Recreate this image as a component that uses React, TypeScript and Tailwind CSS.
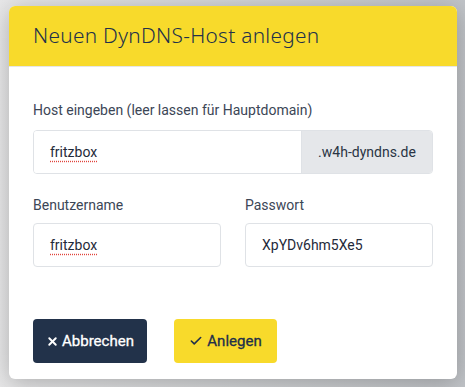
import React from 'react';
import { X, Check } from 'lucide-react';

const Field: React.FC<{ value: string; spell?: boolean; className?: string }> = ({ value, spell, className }) => (
  <div className={`flex h-[44px] items-center rounded border border-[#dfe2e6] bg-white px-4 ${className ?? ''}`}>
    <span
      className={`text-[14px] text-[#1f2a3a] ${spell ? 'underline decoration-dotted decoration-[#e0443c] underline-offset-[4px]' : ''}`}
    >
      {value}
    </span>
  </div>
);

export default function App() {
  return (
    <div
      className="h-[387px] w-[465px] overflow-hidden bg-gradient-to-r from-[#e8e8e9] via-[#d4d6d8] to-[#c1c4c8] pl-[9px] pt-[6px]"
      style={{ fontFamily: 'Roboto, "Liberation Sans", sans-serif' }}
    >
      <div className="h-[373px] w-[448px] overflow-hidden rounded-md bg-white shadow-[0_4px_24px_rgba(0,0,0,0.25)]">
        <div className="flex h-[61px] items-center border-b border-[#e6e6e6] bg-[#f8da2b] px-6">
          <h1
            className="text-[20.8px] font-light tracking-[0.3px] text-[#22304a]"
            style={{ fontFamily: '"Noto Sans", "Open Sans", sans-serif' }}
          >
            Neuen DynDNS-Host anlegen
          </h1>
        </div>

        <div className="px-6 pt-[33px]">
          <label className="block text-[14px] leading-5 text-[#3c4656]">
            Host eingeben (leer lassen für Hauptdomain)
          </label>
          <div className="mt-[10px] flex h-[44px] overflow-hidden rounded border border-[#dfe2e6]">
            <div className="flex flex-1 items-center bg-white px-4">
              <span className="text-[14px] text-[#1f2a3a] underline decoration-dotted decoration-[#e0443c] underline-offset-[4px]">
                fritzbox
              </span>
            </div>
            <div className="flex w-[131px] items-center justify-center border-l border-[#dfe2e6] bg-[#e5e7ea] text-[14px] text-[#2a3444]">
              .w4h-dyndns.de
            </div>
          </div>

          <div className="mt-[21px] grid grid-cols-2 gap-6">
            <div>
              <label className="block text-[14px] leading-5 text-[#3c4656]">Benutzername</label>
              <Field value="fritzbox" spell className="mt-[8px]" />
            </div>
            <div>
              <label className="block text-[14px] leading-5 text-[#3c4656]">Passwort</label>
              <Field value="XpYDv6hm5Xe5" className="mt-[8px]" />
            </div>
          </div>

          <div className="mt-[52px] flex gap-[27px]">
            <button className="flex h-[44px] w-[114px] items-center justify-center gap-[3px] rounded bg-[#22324a] text-[15px] font-normal text-white [-webkit-text-stroke:0.3px_white]">
              <X size={13} strokeWidth={3.5} />
              Abbrechen
            </button>
            <button className="flex h-[44px] w-[103px] items-center justify-center gap-[4px] rounded bg-[#f8da2b] text-[15px] font-normal text-[#22304a] [-webkit-text-stroke:0.3px_#22304a]">
              <Check size={14} strokeWidth={2.75} />
              Anlegen
            </button>
          </div>
        </div>
      </div>
    </div>
  );
}
